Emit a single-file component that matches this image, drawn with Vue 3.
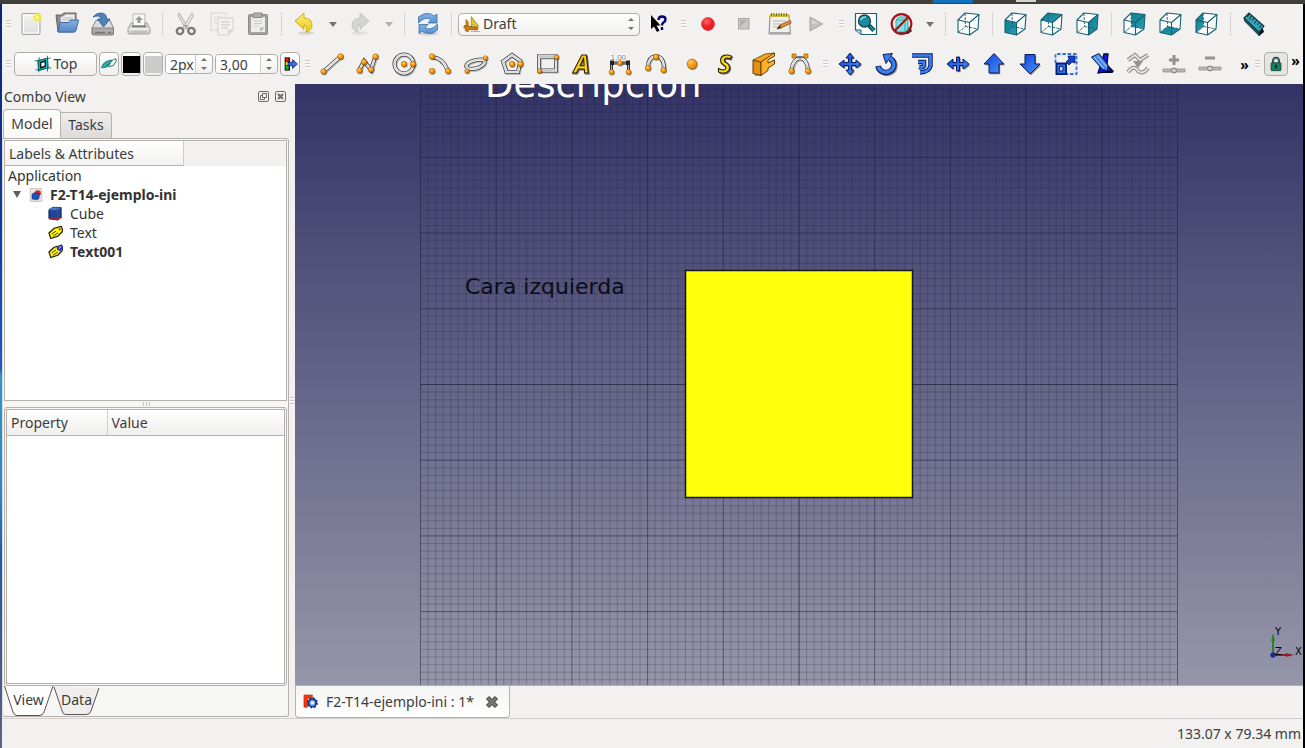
<script setup>
import { ref } from 'vue'

const node = (x, y, r = 3) => `<circle cx="${x + 0.6}" cy="${y + 0.8}" r="${r}" fill="#000" opacity=".45"/><circle cx="${x}" cy="${y}" r="${r - 0.3}" fill="url(#g-node)" stroke="#b86a00" stroke-width=".7"/>`
const tube = (d) => `<path d="${d}" fill="none" stroke="#999" stroke-width="4" transform="translate(1 1)" opacity=".6"/><path d="${d}" fill="none" stroke="#3a3d3e" stroke-width="4"/><path d="${d}" fill="none" stroke="#fff" stroke-width="2.4"/><path d="${d}" fill="none" stroke="#888" stroke-width=".5"/>`
const blue = (d) => `<path d="${d}" fill="#555" opacity=".7" transform="translate(1.2 1.2)"/><path d="${d}" fill="url(#g-blue)" stroke="#0b1a5e" stroke-width="1" stroke-linejoin="round"/>`
const letter = (c, fill) => `<text x="2" y="21" font-family="Open Sans, sans-serif" font-size="25" font-style="italic" font-weight="700" fill="${fill}" stroke="#29240a" stroke-width="1.1" filter="url(#g-shadow)">${c}</text>`
const faces = {
  front: 'M1 8L12.5 10.5V23L1 20.5Z',
  top: 'M1 8L8 1L22 2.5L12.5 10.5Z',
  right: 'M12.5 10.5L22 2.5L21 17L12.5 23Z',
  rear: 'M8 1L22 2.5L21 17L8.5 14.5Z',
  bottom: 'M1 20.5L8.5 14.5L21 17L12.5 23Z',
  left: 'M1 8L8 1L8.5 14.5L1 20.5Z',
}
const cube = (face) => `<path d="M1 8L8 1L22 2.5L21 17L12.5 23L1 20.5Z" fill="#fbfdfd"/>${face ? `<path d="${faces[face]}" fill="url(#g-teal)"/>` : ''}<path d="M8 1L8.5 14.5L1 20.5M8.5 14.5L21 17" fill="none" stroke="#17606f" stroke-width=".9" stroke-dasharray="3 1"/><path d="M1 8L8 1L22 2.5L21 17L12.5 23L1 20.5ZM1 8L12.5 10.5L22 2.5M12.5 10.5V23" fill="none" stroke="#17606f" stroke-width="1.1" stroke-linejoin="round"/>`
const tag = '<path d="M1 8.500L6.500 3.500L14 1.500Q16 3.500 15 7.500L10.500 12L3 14.500Z" fill="#fdf009" stroke="#1a1a06" stroke-width="1.300"/><path d="M4 9.500L8.500 6.500M5.500 12L10.500 8.500" stroke="#333"/><circle cx="12.500" cy="4.500" r="1" fill="#333"/>'

const icons = {
  new: '<rect x="3" y="1.5" width="18" height="21" rx="1" fill="url(#g-paper)" stroke="#a3a39e"/><rect x="4.5" y="3" width="15" height="18" fill="none" stroke="#fff"/><circle cx="18.5" cy="5.5" r="5" fill="#f8ee4a" opacity=".55"/><circle cx="18.5" cy="5.5" r="3" fill="#f6ea1d"/><circle cx="18.5" cy="5.5" r="1.3" fill="#fff"/>',
  open: '<path d="M1 3H7L8.500 1H21V10L19 20H3Z" fill="#8a8b88" stroke="#62635f"/><path d="M5 5.500L11 2H20V13H6Z" fill="#eee" stroke="#8c8c88" stroke-width=".7"/><path d="M7 6H18M7 8H18" stroke="#bbb"/><path d="M3 20L5 10.500H14L15.500 8H23.500L21 18.500Q20.700 20 19 20Z" fill="url(#g-folder)" stroke="#3e6ba4"/>',
  save: '<path d="M5 8.500H19L22.500 16V22Q22.500 23 21 23H3Q1 23 1 22V16Z" fill="#dcdcda" stroke="#80817e"/><path d="M1.500 16H22.500V22H1.500Z" fill="#aeafac" stroke="#757673" stroke-width=".8"/><path d="M4 20.500H14M17 20.500H20" stroke="#737472" stroke-width="1.500"/><path d="M2 5Q5 1 10 1Q15.500 1 15.800 7H19L12.500 15L6.500 7H10Q9.500 4 7 4Q4 4 2 5Z" fill="#4d82bb" stroke="#2b5a93" stroke-width=".8"/>',
  print: '<path d="M6 2H18V14H6Z" fill="#f7f7f7" stroke="#b5b5b2"/><path d="M12 4L16 8H13.500V11H10.500V8H8Z" fill="#999"/><path d="M4 11H6V14H18V11H20L23 17V20.500Q23 22 21 22H3Q1 22 1 20.500V17Z" fill="#d6d6d4" stroke="#9a9b98"/><path d="M1.500 17H22.500" stroke="#fff"/><path d="M5 14.500H19" stroke="#777" stroke-width="1.500"/><path d="M4 20H20" stroke="#aaa"/>',
  cut: '<path d="M5 1L14.500 15.500L12 17L4 3.500Z" fill="#e3e3e1" stroke="#a0a19e" stroke-width=".8"/><path d="M18 1L9 15.500L11.500 17L19.500 3.500Z" fill="#e9e9e7" stroke="#a0a19e" stroke-width=".8"/><ellipse cx="6" cy="19" rx="3.300" ry="3" fill="none" stroke="#7b7c7a" stroke-width="2.400" transform="rotate(-35 6 19)"/><ellipse cx="17.500" cy="19" rx="3.300" ry="3" fill="none" stroke="#7b7c7a" stroke-width="2.400" transform="rotate(35 17.500 19)"/><circle cx="11.700" cy="14" r="1" fill="#777"/>',
  copy: '<g opacity=".4"><rect x="1" y="1" width="15" height="17" fill="#f3f3f1" stroke="#a9aaa6"/><path d="M4 5H13M4 8H13M4 11H13" stroke="#bbb"/><path d="M8 6H23V18L18 23H8Z" fill="#f8f8f7" stroke="#9b9c99"/><path d="M11 10H20M11 13H20M11 16H18" stroke="#aaa" stroke-width="1.500"/><path d="M18 23V18H23Z" fill="#ccc" stroke="#999" stroke-width=".6"/></g>',
  paste: '<rect x="2.500" y="2.500" width="19" height="20" rx="1" fill="#a3a4a1" stroke="#8b8c89"/><path d="M5 5H19V20H5Z" fill="#ededeb"/><path d="M8 1H16V5.500H7V3Z" fill="#b0b1ae" stroke="#868784"/><path d="M8 9H16M8 11.500H16M8 14H13" stroke="#ccc"/><path d="M14 20V15.500H19Z" fill="#bbb"/>',
  undo: '<ellipse cx="13" cy="21" rx="8" ry="1.800" fill="#777" opacity=".22"/><path d="M2 9L11 1V6Q19 6.500 19 13Q19 18 13 20.500Q15 13.500 11 13V17.500Z" fill="url(#g-undo)" stroke="#c9a500" stroke-width=".9"/>',
  redo: '<g opacity=".45"><ellipse cx="11" cy="21" rx="8" ry="1.800" fill="#777" opacity=".3"/><path d="M20 9L11 1V6Q3 6.500 3 13Q3 18 9 20.500Q7 13.500 11 13V17.500Z" fill="#b1b2af" stroke="#8b8c89" stroke-width=".9"/></g>',
  refresh: '<ellipse cx="12" cy="21.500" rx="10" ry="2" fill="#777" opacity=".25"/><path d="M2.500 11V5Q8 .5 13 1.500Q16 2 18 4L21 2V11H12L15 7.500Q9 4 2.500 11Z" fill="url(#g-refresh)" stroke="#3b70ae" stroke-width=".8"/><path d="M21.500 12V18Q17 22.500 12 21.500Q8 21 6 19L3 21.500V12.500H12L9 16Q15 19 21.500 12Z" fill="url(#g-refresh)" stroke="#3b70ae" stroke-width=".8"/>',
  draft: '<path d="M8 16V1L18 14Z" fill="#e0c91a" stroke="#80750a" stroke-width=".8" transform="translate(3 1)"/><path d="M12 12V16H16Z" fill="#f2f1f0" stroke="#80750a" stroke-width=".6"/><path d="M2 14L20 17L19 20L8 19L7 22L3 21L4 18L1 17Z" fill="#d98007" stroke="#714100" stroke-width=".9"/><path d="M4 6L7 9V14H4Z" fill="#e89a20" stroke="#714100" stroke-width=".8"/><path d="M10 22H23" stroke="#999"/>',
  whats: '<path d="M5 3V17L8 14.500L11 20L13.500 18.500L10.500 13.500H14.500Z" fill="#000"/><path d="M12.500 8Q12.500 4.500 16 4.500Q19.500 4.500 19.500 7.500Q19.500 9.500 17.500 10.500Q16 11.500 16 13.500M16 15V18" fill="none" stroke="#00007d" stroke-width="2.400"/>',
  record: '<circle cx="12" cy="12" r="6.500" fill="url(#g-red)" stroke="#d33" stroke-width=".7"/>',
  stop: '<rect x="6.500" y="6.500" width="10.500" height="10.500" fill="#c8c8c6" stroke="#a7a8a5"/><path d="M8 15V8H15Z" fill="#b0b1ae"/>',
  macro: '<path d="M2 3H21L22.500 22H1Z" fill="#efefed" stroke="#888985"/><path d="M1 20H22.500V22H1Z" fill="#aaa"/><path d="M2 2H21V5H2Z" fill="#c9bb45"/><path d="M3.500 1V4M6 1V4M8.500 1V4M11 1V4M13.500 1V4M16 1V4M18.500 1V4" stroke="#81751d"/><path d="M5 9H18M5 12H13M5 15H11" stroke="#b9b9b6"/><path d="M9 17L12 13L22 8.500L23 11L13 16Z" fill="#e98f26" stroke="#7b4b16" stroke-width=".8"/><path d="M9 17L12 13L13 16Z" fill="#333"/><path d="M20.500 9L23 8L23.500 10.500L22 11.500Z" fill="#dc6464"/>',
  play: '<path d="M6 5L18.500 12L6 19Z" fill="#c0c1be" stroke="#a3a4a1"/><path d="M8 8L14 11L8 12Z" fill="#ddd"/>',
  fit: '<path d="M1.500 1.500H22.500V22.500H7L1.500 18Z" fill="#fff" stroke="#1e6470" stroke-width="1.200"/><path d="M1.500 18H7V22.500" fill="#b6d7da" stroke="#1e6470"/><circle cx="10.500" cy="9" r="6" fill="#1c8ba0" stroke="#0f4955" stroke-width="1.300"/><path d="M6.500 8Q8 4.500 12 5" fill="none" stroke="#9fd3db" stroke-width="1.500"/><path d="M15 13.500L20 18.500" stroke="#0f4955" stroke-width="4.500"/><path d="M16 14.500L19.500 18" stroke="#1c8ba0" stroke-width="2"/>',
  drawstyle: '<path d="M7 20L12 22H18L22 19L20 15Z" fill="#000" opacity=".85"/><path d="M6 8L9 5H18V18L15 20H6Z" fill="#7be3e4" stroke="#35a5aa"/><path d="M6 8H15V20M15 8L18 5" fill="none" stroke="#35a5aa"/><path d="M13 12L20 3" stroke="#f5d13c" stroke-width="1.500"/><circle cx="11.500" cy="12" r="9.800" fill="none" stroke="#a5131a" stroke-width="2.200"/><path d="M5 18.500L18 5.500" stroke="#a5131a" stroke-width="2.200"/>',
  iso: cube(''), front: cube('front'), top: cube('top'), right: cube('right'), rear: cube('rear'), bottom: cube('bottom'), left: cube('left'),
  measure: '<path d="M2 8L16 22L17 24L22 20L21 17Z" fill="#111"/><path d="M2 6L7 1L22 14L17 20.500Z" fill="#33a2b5" stroke="#0c3039" stroke-width="1.100"/><path d="M17 20.500V23.500L3 9.500L2 6Z" fill="#176071" stroke="#0c2a30" stroke-width=".8"/><path d="M7 2L5.500 5M9.500 4L7.500 7.500M12 6L10.500 8.500M14.500 8.500L12.500 11.500M17 10.500L15.500 13M19.500 12.500L17.500 16" stroke="#06242b"/>',
  line: tube('M3 20L21 4') + node(3.5, 19.5) + node(20.5, 4.5),
  wire: tube('M3 18.500L8 9L15 18L19 5') + node(3.5, 18.5) + node(8, 10) + node(15, 17.500) + node(19.500, 4.500),
  circle: tube('M12 2.500A9.500 9.500 0 1 0 12 21.500A9.500 9.500 0 1 0 12 2.500') + node(12, 12) + node(21, 12),
  arc: tube('M4 5Q15 6 19.500 18') + node(4, 4.500) + node(4, 19) + node(20, 19),
  ellipse: tube('M2.500 15.500C1 10.500 10 7.500 18 7.500C24 9 19 13.500 15 15.500C9 17.500 5 17.500 2.500 15.500') + node(3, 19, 2.500) + node(21.500, 6, 2.500),
  polygon: tube('M12 3L20.500 9L18 20H6.500L3 9.500Z') + node(12, 12) + node(20.500, 12),
  rect: tube('M3 4.500H20V18.500H3Z') + node(3.500, 19, 2.500) + node(20.500, 5, 2.500),
  text: letter('A', '#ffd20a'),
  dim: '<text x="2.500" y="8" font-family="Liberation Sans, sans-serif" font-size="8" fill="#777" stroke="#fff" stroke-width="1.500" paint-order="stroke">1,00</text><path d="M3.500 20V11H20.500V20" fill="none" stroke="#333" stroke-width="3"/><path d="M3.500 20V11H20.500V20" fill="none" stroke="#aaa" stroke-width="1"/><path d="M2 8.500H6V13H2ZM18 8.500H22V13H18Z" fill="#222"/>' + node(12, 11, 2.7) + node(3.500, 20, 2.7) + node(20.500, 20, 2.7),
  bspline: tube('M4 15Q4 5 12 4Q20 5 20 17') + node(4, 16) + node(12, 5) + node(19.500, 18),
  point: node(12, 12, 5.200),
  shape: letter('S', '#f5da1c'),
  facebinder: '<path d="M2 23.500V7L12 2L22 .8V4L15 6V10L22 7V11L15 15V18L9 21V23Z" fill="#333" opacity=".5" transform="translate(1 .5)"/><path d="M1 8L9 10V23.500L1 21.500Z" fill="#e88e10" stroke="#653d05"/><path d="M9 10L20 2L22.500 1V4L16 8V11L22.500 8V12L16 16V18.500L9 23.500Z" fill="#ffb02a" stroke="#653d05"/><path d="M1 8L13 2L22 1L9 10Z" fill="#f5a31c" stroke="#653d05" stroke-width=".8"/>',
  bezier: tube('M3.500 18Q5 7 12 6Q19 7 20 18') + '<path d="M6 4L12 6L18 4" stroke="#555" fill="none"/><path d="M4 2H8V6H4ZM16 2H20V6H16Z" fill="#f59a13" stroke="#9a5900" stroke-width=".7"/>' + node(3.500, 19) + node(20, 19),
  move: blue('M12 1L16 6H13.500V10.500H18V8L23 12L18 16V13.500H13.500V18H16L12 23L8 18H10.500V13.500H6V16L1 12L6 8V10.500H10.500V6H8Z'),
  rotate: '<path d="M4 14A8 7.500 0 1 0 16 6.500" fill="none" stroke="#555" opacity=".6" stroke-width="5.500" transform="translate(1 1)"/><path d="M4 14A8 7.500 0 1 0 16 6.500" fill="none" stroke="#0b1a5e" stroke-width="5.500"/><path d="M9 2.500L18.500 1.500L12 11.500Z" fill="#3b80ec" stroke="#0b1a5e"/><path d="M4.200 14.800A8 7.500 0 1 0 15.500 6" fill="none" stroke="#3b80ec" stroke-width="3.500"/>',
  offset: '<path d="M2 3.500H20.500V14Q19 20 10 20.500M8 10H14V14Q13 16 9 15" fill="none" stroke="#0b1a5e" stroke-width="4.500"/><path d="M2 3.500H20.500V14Q19 20 10 20.500M8 10H14V14Q13 16 9 15" fill="none" stroke="#3b80ec" stroke-width="2.600"/>',
  trimex: blue('M1 12L7 7V10.500H10.500V5H13.500V10.500H17V7L23 12L17 17V13.500H13.500V19H10.500V13.500H7V17Z'),
  upgrade: blue('M12 1.500L22 12H17V21H7V12H2Z'),
  downgrade: blue('M12 22L2 12H7V2.500H17V12H22Z'),
  scale: '<path d="M1.500 11V2H22.500V22H13" fill="none" stroke="#2f6fe8" stroke-width="1.800" stroke-dasharray="3.500 1.800"/><path d="M2.500 11.500H12V22H2.500Z" fill="#2a78ef" stroke="#08217c" stroke-width="2"/><path d="M5.500 14.500H9V19H5.500Z" fill="#ddd" stroke="#08217c"/><path d="M12 10L15 7L14 4H21V11L18 10L15 13Z" fill="#1742c6" stroke="#0b1a5e" stroke-width=".8"/>',
  edit: '<path d="M14 2H18L17 13L23 19L8 21L10 15Z" fill="#1018e0" stroke="#05082e" stroke-width="1.300"/><path d="M1.500 5L9 1.500L18 13L17.500 19L12 17Z" fill="#4386ec" stroke="#0b1a5e"/><path d="M4 5L14 17M7 3.500L17 15" stroke="#b6d3ff"/><path d="M8 21L22 18L23 21Z" fill="#05082e"/>',
  wiresp: '<g fill="none"><path d="M2 8L9 3L14 8L22 3M2 20Q8 12 12 19Q17 23 22 16" stroke="#888" stroke-width="4"/><path d="M2 8L9 3L14 8L22 3M2 20Q8 12 12 19Q17 23 22 16" stroke="#e5e5e3" stroke-width="2"/></g><path d="M7 9H17L12 16Z" fill="#929290"/>',
  addpoint: '<path d="M10.500 3H13.500V6.500H17V9.500H13.500V13H10.500V9.500H7V6.500H10.500Z" fill="#929290"/><path d="M1 17H23V20H1Z" fill="#bbb" stroke="#858583" stroke-width=".7"/><circle cx="12" cy="18.500" r="2.500" fill="#ccc" stroke="#777"/>',
  delpoint: '<path d="M7 4.500H17V7.500H7Z" fill="#929290"/><path d="M1 15H23V18H1Z" fill="#bbb" stroke="#858583" stroke-width=".7"/><circle cx="12" cy="16.500" r="2.500" fill="#ccc" stroke="#777"/>',
  plane: '<path d="M5 8L18 4L19 17L6 21Z" fill="#22c0c2" stroke="#0a5055" stroke-width="1.200"/><path d="M9 10L15 8V15L9 17Z" fill="#fff" stroke="#111" stroke-width="1.800"/><path d="M1 8L22 4M2 20L23 17M7 3L6 23M18 1L18 22" stroke="#0f7278" stroke-width="1.200"/>',
  construction: '<path d="M11 15L16 7L22 4L23 7L19 14L12 16Z" fill="#fff" stroke="#0f6b5d" stroke-width="1.400"/><path d="M1 18Q2 10 11 7L16 6L11 15L7 17Z" fill="#14a098" stroke="#0b5149" stroke-width="1"/><path d="M3 17Q7 10 14 8" stroke="#5be0cc" fill="none"/>',
  apply: '<path d="M4 2H12V22H4Z" fill="#161616"/><path d="M5.500 3.500H10V8H5.500Z" fill="#f11"/><path d="M5.500 9H10V14H5.500Z" fill="#e6e817"/><path d="M5.500 15H10V20.500H5.500Z" fill="#0b3"/><path d="M9 9.500H16V5.500L23 12L16 18.500V14.500H9Z" fill="#3471e8" stroke="#0b1a5e" stroke-width="1.200"/>',
  lock: '<path d="M7.500 11V7Q8 2.500 12 2.500Q16 2.500 16.500 7V11" fill="none" stroke="#15423a" stroke-width="3"/><path d="M7.500 10V7Q8 3 12 3Q16 3 16.500 7V10" fill="none" stroke="#7dafa3" stroke-width=".8"/><rect x="4.500" y="10" width="15" height="12" rx="1" fill="#15805f" stroke="#0e342a"/><circle cx="12" cy="15" r="1.700" fill="#05201a"/><path d="M12 15V19" stroke="#05201a" stroke-width="1.500"/>',
  doc: '<path d="M1.500 .5H14.500V15.500H1.500Z" fill="#e4e4e2" stroke="#c2c2bf"/><circle cx="10" cy="6" r="3.500" fill="#d5271c"/><path d="M3.500 7L6 5.500L11.500 6.500V12L9 13.500L3.500 12.500Z" fill="#2350b8" stroke="#122d77" stroke-width=".7"/>',
  box: '<path d="M1 4L5 1.500H14V12L10.500 15L1 13.500Z" fill="#1b479f" stroke="#071b4a"/><path d="M1 4L5 1.500H14L10 4.500Z" fill="#4c7dcc"/><path d="M10 4.500V14.500" stroke="#0a1d4d"/><path d="M1 13.500L10 14L15 12M10 14V2" stroke="#e41515" stroke-width="1.100" fill="none"/>',
  tag,
  tagsel: tag + '<path d="M9.500 2L12 4L14.500 0L16 3L13 8L9.500 5.500Z" fill="#1826f5"/><path d="M12 5L14 2.500" stroke="#cfe"/>',
  app: '<path d="M1 1H10V4.500H5V7H9V10H5V14H1Z" fill="#f5380b" stroke="#b3200a" stroke-width=".6"/><circle cx="10" cy="9.500" r="4" fill="#8fb0ed" stroke="#143b93" stroke-width="2"/><circle cx="10" cy="9.500" r="5.200" fill="none" stroke="#143b93" stroke-width="1.500" stroke-dasharray="2 2.080"/><circle cx="10" cy="9.500" r="1.500" fill="#fff"/>',
}

const fileTools = [
  ['new', 'New'], ['open', 'Open'], ['save', 'Save'], ['print', 'Print'], '|',
  ['cut', 'Cut'], ['copy', 'Copy'], ['paste', 'Paste'], '|',
  ['undo', 'Undo'], 'v', ['redo', 'Redo'], 'd', '|', ['refresh', 'Refresh'], '|',
]
const viewTools = [
  ['whats', "What's this?"], ':', ['record', 'Record macro'], ['stop', 'Stop macro'], ['macro', 'Macros'], ['play', 'Run macro'], ':',
  ['fit', 'Fit all'], ['drawstyle', 'Draw style'], 'v', '|', ['iso', 'Axonometric'], '|',
  ['front', 'Front view'], ['top', 'Top view'], ['right', 'Right view'], '|',
  ['rear', 'Rear view'], ['bottom', 'Bottom view'], ['left', 'Left view'], '|', ['measure', 'Measure'],
]
const draftTools = [
  ':', ['line', 'Line'], ['wire', 'Wire'], ['circle', 'Circle'], ['arc', 'Arc'], ['ellipse', 'Ellipse'], ['polygon', 'Polygon'],
  ['rect', 'Rectangle'], ['text', 'Text'], ['dim', 'Dimension'], ['bspline', 'B-spline'], ['point', 'Point'], ['shape', 'Shape string'],
  ['facebinder', 'Facebinder'], ['bezier', 'Bezier curve'], ':',
  ['move', 'Move'], ['rotate', 'Rotate'], ['offset', 'Offset'], ['trimex', 'Trimex'], ['upgrade', 'Upgrade'], ['downgrade', 'Downgrade'],
  ['scale', 'Scale'], ['edit', 'Edit'], ['wiresp', 'Wire to B-spline'], ['addpoint', 'Add point'], ['delpoint', 'Delete point'],
]
const kinds = { '|': 'sep', ':': 'grip', v: 'drop', d: 'drop dim' }

const workbench = ref('Draft')
const lineWidth = ref('2px')
const fontSize = ref('3,00')

const objects = [
  { icon: 'box', name: 'Cube' },
  { icon: 'tag', name: 'Text' },
  { icon: 'tagsel', name: 'Text001', active: true },
]

const grid = Array.from({ length: 101 }, (_, i) => ({
  x: 125.5 + i * 7.57,
  y: 300.5 + (i - 50) * 7.57,
  level: i === 50 ? 'axis' : i % 10 === 0 ? 'major' : 'minor',
}))
</script>

<template>
  <div class="window">
    <svg class="defs" aria-hidden="true">
      <defs>
        <radialGradient id="g-node" cx=".35" cy=".3" r=".8"><stop offset="0" stop-color="#ffd27a" /><stop offset=".45" stop-color="#ff9f14" /><stop offset="1" stop-color="#d97800" /></radialGradient>
        <radialGradient id="g-red" cx=".4" cy=".3" r=".8"><stop offset="0" stop-color="#fb6a6a" /><stop offset=".5" stop-color="#ee2229" /><stop offset="1" stop-color="#e01620" /></radialGradient>
        <linearGradient id="g-blue" x1="0" y1="0" x2="1" y2="1"><stop offset="0" stop-color="#0d3fe0" /><stop offset="1" stop-color="#4b97f3" /></linearGradient>
        <linearGradient id="g-teal" x1="0" y1="0" x2="1" y2="1"><stop offset="0" stop-color="#0c7c91" /><stop offset="1" stop-color="#2b9db2" /></linearGradient>
        <linearGradient id="g-paper" x1="0" y1="0" x2="0" y2="1"><stop offset="0" stop-color="#f3f3f2" /><stop offset="1" stop-color="#dededc" /></linearGradient>
        <linearGradient id="g-folder" x1="0" y1="0" x2="0" y2="1"><stop offset="0" stop-color="#87b1e0" /><stop offset="1" stop-color="#5688c6" /></linearGradient>
        <linearGradient id="g-undo" x1="0" y1="0" x2="0" y2="1"><stop offset="0" stop-color="#fbee83" /><stop offset="1" stop-color="#edc910" /></linearGradient>
        <linearGradient id="g-refresh" x1="0" y1="0" x2="0" y2="1"><stop offset="0" stop-color="#82b2e3" /><stop offset="1" stop-color="#5a93d2" /></linearGradient>
        <linearGradient id="g-sky" x1="0" y1="0" x2="0" y2="1"><stop offset="0" stop-color="#333366" /><stop offset="1" stop-color="#9696aa" /></linearGradient>
        <filter id="g-shadow"><feDropShadow dx="1" dy="1" stdDeviation=".4" flood-color="#333" flood-opacity=".7" /></filter>
      </defs>
    </svg>

    <div class="desktop-bar"><i class="launcher"></i><i class="thumb"></i></div>

    <div class="frame">
      <header>
        <div class="toolbar">
          <span class="grip"></span>
          <template v-for="(t, i) in fileTools" :key="i">
            <span v-if="typeof t === 'string'" :class="kinds[t]"></span>
            <button v-else class="tool" :aria-label="t[1]"><svg viewBox="0 0 24 24" v-html="icons[t[0]]"></svg></button>
          </template>
          <div class="workbench">
            <svg viewBox="0 0 24 24" v-html="icons.draft"></svg>
            <select v-model="workbench" aria-label="Workbench"><option>Draft</option></select>
            <span class="arrows"><i></i><i></i></span>
          </div>
          <template v-for="(t, i) in viewTools" :key="i">
            <span v-if="typeof t === 'string'" :class="kinds[t]"></span>
            <button v-else class="tool" :aria-label="t[1]"><svg viewBox="0 0 24 24" v-html="icons[t[0]]"></svg></button>
          </template>
        </div>

        <div class="toolbar">
          <span class="grip"></span>
          <div class="settings">
            <button class="push plane"><svg viewBox="0 0 24 24" v-html="icons.plane"></svg>Top</button>
            <button class="push" aria-label="Construction mode"><svg viewBox="0 0 24 24" v-html="icons.construction"></svg></button>
            <button class="push" aria-label="Line color"><i class="swatch black"></i></button>
            <button class="push" aria-label="Face color"><i class="swatch"></i></button>
            <div class="spin narrow">
              <input v-model="lineWidth" type="text" aria-label="Line width" />
              <span class="arrows"><i></i><i></i></span>
            </div>
            <div class="spin">
              <input v-model="fontSize" type="text" aria-label="Font size" />
              <span class="arrows"><i></i><i></i></span>
            </div>
            <button class="push" aria-label="Apply style"><svg viewBox="0 0 24 24" v-html="icons.apply"></svg></button>
          </div>
          <template v-for="(t, i) in draftTools" :key="i">
            <span v-if="typeof t === 'string'" :class="kinds[t]"></span>
            <button v-else class="tool" :aria-label="t[1]"><svg viewBox="0 0 24 24" v-html="icons[t[0]]"></svg></button>
          </template>
          <div class="overflow">
            <button class="more">»</button>
            <span class="grip"></span>
            <button class="push lock" aria-label="Toggle snap"><svg viewBox="0 0 24 24" v-html="icons.lock"></svg></button>
            <button class="more raised">»</button>
          </div>
        </div>
      </header>

      <main>
        <aside>
          <div class="dock-title">
            <h1>Combo View</h1>
            <button aria-label="Float"><svg viewBox="0 0 11 11"><rect x=".5" y=".5" width="10" height="10" rx="1.500" /><path d="M4.500 2.500H8.500V6.500H4.500ZM6.500 6.500V8.500H2.500V4.500H4.500" /></svg></button>
            <button aria-label="Close"><svg viewBox="0 0 11 11"><rect x=".5" y=".5" width="10" height="10" rx="1.500" /><path class="bold" d="M3 3L8 8M8 3L3 8" /></svg></button>
          </div>
          <nav class="tabs"><button class="current">Model</button><button>Tasks</button></nav>
          <div class="pane">
            <section class="tree">
              <div class="tree-head"><span>Labels &amp; Attributes</span></div>
              <ul>
                <li>Application</li>
                <li class="doc"><i class="twisty"></i><svg viewBox="0 0 16 16" v-html="icons.doc"></svg><b>F2-T14-ejemplo-ini</b></li>
                <li v-for="o in objects" :key="o.name" class="object" :class="{ active: o.active }">
                  <svg viewBox="0 0 16 16" v-html="icons[o.icon]"></svg>{{ o.name }}
                </li>
              </ul>
            </section>
            <div class="splitter"></div>
            <section class="props">
              <div class="props-box">
                <table>
                  <thead><tr><th>Property</th><th>Value</th></tr></thead>
                </table>
              </div>
            </section>
            <nav class="south-tabs">
              <svg class="trapezoids" viewBox="0 0 100 30" width="100" height="30" aria-hidden="true">
                <path d="M50 1L58.500 26Q59.500 28.500 62 28.500H82Q86 28.500 87 25L95 2" fill="#efeeec" />
                <path d="M.5 0L9 26Q10 29.500 13 29.500H35Q39 29.500 40 26L49 0" fill="#fff" />
              </svg>
              <button class="view">View</button><button class="data">Data</button>
            </nav>
          </div>
        </aside>

        <div class="handle"><span class="grip"></span></div>

        <div class="mdi">
          <svg class="scene" viewBox="0 0 1008 601" preserveAspectRatio="xMidYMid slice">
            <rect x="-1000" width="3008" height="601" fill="url(#g-sky)" />
            <g class="grid">
              <path v-for="(g, i) in grid" :key="i" :class="g.level" :d="`M${g.x} -78V679M125.500 ${g.y}H882.500`" />
            </g>
            <text class="white" x="190" y="13">Descripcion</text>
            <text class="label" x="170" y="210">Cara izquierda</text>
            <rect x="390.500" y="186.500" width="227" height="227" fill="#ffff0b" stroke="#15151c" stroke-width="1.500" />
            <g class="axes">
              <path d="M978 571V555" stroke="#258528" stroke-width="2" /><path d="M976 557L978 549L980 557Z" fill="#258528" />
              <path d="M978 571H992" stroke="#8b2022" stroke-width="2" /><path d="M991 569L999 571L991 573Z" fill="#8b2022" />
              <circle cx="978" cy="571" r="2.700" fill="#25259a" />
              <text x="980" y="551">Y</text><text x="980" y="571">Z</text><text x="1000" y="571">X</text>
            </g>
          </svg>
          <div class="mdi-tabs">
            <div class="mdi-tab">
              <svg viewBox="0 0 16 16" v-html="icons.app"></svg>
              <span>F2-T14-ejemplo-ini : 1*</span>
              <button aria-label="Close document"><svg viewBox="0 0 14 14"><path d="M2.500 2.500L11.500 11.500M11.500 2.500L2.500 11.500" stroke="#454543" stroke-width="4.500" /><path d="M3 3L11 11M11 3L3 11" stroke="#777775" stroke-width="2.500" /></svg></button>
            </div>
          </div>
        </div>
      </main>

      <footer>133.07 x 79.34 mm</footer>
    </div>
  </div>
</template>

<style>
html, body { margin: 0; background: #f2f1f0; }
</style>

<style scoped>
.window { height: 100vh; display: flex; flex-direction: column; overflow: hidden; font: 14px/19px "Noto Sans", "Open Sans", sans-serif; color: #3c3c3c; }
.window *, .window *::before { box-sizing: border-box; }
.defs { position: absolute; width: 0; height: 0; }
button { font: inherit; color: inherit; border: 0; padding: 0; margin: 0; background: none; display: flex; align-items: center; justify-content: center; flex: none; }
svg { display: block; flex: none; }

.desktop-bar { height: 4px; flex: none; background: linear-gradient(#42413c, #3c3b37); display: flex; justify-content: flex-end; gap: 43px; padding-right: 269px; }
.launcher { width: 40px; height: 3px; background: #0d70b8; }
.thumb { width: 20px; height: 2px; background: #d5d3d0; }
.frame { flex: 1; min-height: 0; display: flex; flex-direction: column; border-right: 2px solid #000; padding-left: 2px; background: linear-gradient(#0a2472, #103c9e 30%, #1a5cba 49%, #2f95cc 50%, #2a86c6 66%, #1c5cab 74%, #3f5a92 86%, #5a6486) 0 0 / 2px 100% no-repeat, #f2f1f0; }

.toolbar { height: 40px; display: flex; align-items: center; }
.tool { width: 36px; height: 36px; }
.tool svg { width: 24px; height: 24px; overflow: visible; }
.sep { width: 11px; flex: none; height: 24px; background: linear-gradient(#d6d4d1, #d6d4d1) 5px 0 / 1px 100% no-repeat; }
.grip { width: 14px; height: 8px; flex: none; background: repeating-linear-gradient(#cbc9c6 0 1px, #fdfdfd 1px 2px, transparent 2px 3px) 5px 0 / 5px 8px no-repeat; }
.toolbar > .grip:first-child { width: 11px; background-position-x: 4px; }
.drop { width: 20px; flex: none; display: flex; justify-content: center; }
.drop::before { content: ""; border: 4px solid transparent; border-top: 5px solid #73726f; border-bottom: 0; }
.drop.dim::before { border-top-color: #b3b2af; }

.workbench { position: relative; width: 182px; height: 23px; display: flex; align-items: center; margin-left: 1px; border: 1px solid #b0aeab; border-radius: 4px; background: linear-gradient(#fff, #f2f1f0); }
.workbench > svg { position: absolute; left: 4px; width: 18px; height: 18px; }
select { appearance: none; width: 100%; height: 100%; border: 0; background: none; font: inherit; color: inherit; padding: 0 20px 2px 24px; }
.workbench .arrows { position: absolute; right: 5px; }
.arrows { display: flex; flex-direction: column; gap: 6px; pointer-events: none; }
.arrows i { border: 3px solid transparent; border-top: 0; border-bottom: 3px solid #73726f; }
.arrows i + i { border-top: 3px solid #73726f; border-bottom: 0; }

.settings { display: flex; gap: 2px; align-items: center; margin-left: 1px; }
.push { width: 20px; height: 24px; border: 1px solid #b0aeab; border-radius: 4px; background: linear-gradient(#fff, #efeeed); }
.push svg { width: 16px; height: 16px; }
.plane { width: 83px; gap: 2px; padding-bottom: 1px; }
.plane svg { width: 18px; height: 18px; }
.swatch { width: 17px; height: 17px; margin: 0 -1px; background: #ccc; flex: none; }
.swatch.black { background: #000; }
.spin { width: 63px; height: 20px; display: flex; align-items: center; border: 1px solid #b0aeab; border-radius: 4px; background: linear-gradient(#fff, #f2f1f0); overflow: hidden; }
.spin.narrow { width: 48px; }
.spin input { flex: 1; min-width: 0; height: 100%; border: 0; border-right: 1px solid #cfcdca; padding: 0 0 0 4px; font: inherit; color: inherit; background: #fff; outline: 0; }
.spin .arrows { padding: 0 5px; }
.overflow { display: flex; align-items: center; margin-left: auto; }
.overflow .grip { width: 12px; background-position-x: 3px; }
.more { width: 15px; color: #000; font-size: 14px; font-weight: 700; }
.more.raised { margin-bottom: 8px; }
.lock { width: 24px; background: #e6e4e2; }

main { flex: 1; min-height: 0; display: flex; }
aside { width: 287px; flex: none; display: flex; flex-direction: column; margin-bottom: 1px; }
.dock-title { height: 25px; display: flex; align-items: center; gap: 6px; padding: 0 3px 0 2px; }
h1 { flex: 1; margin: 0; font: inherit; }
.dock-title svg { width: 11px; height: 11px; fill: none; stroke: #6c6b69; }
.dock-title .bold { stroke-width: 2; }
.tabs { height: 29px; display: flex; align-items: flex-end; padding-left: 1px; }
.tabs button { width: 51px; height: 26px; padding-bottom: 2px; border: 1px solid #b5b2ae; border-left: 0; border-bottom: 0; border-radius: 0 4px 0 0; background: linear-gradient(#efeeec, #dddbd8); }
.tabs .current { width: 58px; height: 29px; border-left: 1px solid #b5b2ae; border-radius: 4px 4px 0 0; background: linear-gradient(#fff, #f8f8f7); }
.pane { flex: 1; min-height: 0; display: flex; flex-direction: column; border: 1px solid #b5b2ae; border-left-color: #dbd9d6; border-radius: 0 3px 3px 3px; background: #f6f6f5; padding: 1px 0 0 1px; }
.tree { flex: 262; min-height: 0; border: 1px solid #b5b2ae; background: #fff; margin-right: 1px; }
.tree-head { height: 25px; background: #f2f1f0; }
.tree-head span { display: flex; align-items: center; width: 179px; height: 25px; padding-left: 4px; background: linear-gradient(#fff, #f3f2f1); border-right: 1px solid #cfcdca; border-bottom: 1px solid #b5b2ae; }
ul { list-style: none; margin: 0; padding: 0; color: #333; }
li { height: 19px; display: flex; align-items: center; padding-left: 3px; }
li svg { width: 15px; height: 15px; }
.doc { padding-left: 8px; }
.doc svg { width: 14px; height: 14px; margin: 0 7px 0 8px; }
.twisty { border: 4px solid transparent; border-top: 7px solid #5f5e5c; border-bottom: 0; }
.object { padding-left: 43px; gap: 7px; }
.active { font-weight: 700; }
.splitter { height: 6px; flex: none; background: repeating-linear-gradient(90deg, #c5c3c0 0 1px, transparent 1px 3px) center / 7px 4px no-repeat; }
.props { flex: 278; min-height: 0; border: 1px solid #b5b2ae; border-radius: 3px; padding: 1px; margin-right: 1px; }
.props-box { height: 100%; border: 1px solid #b5b2ae; background: #fff; }
table { width: 100%; border-collapse: collapse; table-layout: fixed; }
th { height: 25px; padding: 1px 0 0 4px; text-align: left; font-weight: 400; background: linear-gradient(#fff, #efeeed); border-bottom: 1px solid #b5b2ae; }
th:first-child { width: 100px; border-right: 1px solid #cfcdca; }
.south-tabs { position: relative; height: 30px; flex: none; display: flex; align-items: flex-start; }
.trapezoids { position: absolute; left: 0; top: 0; stroke: #555; }
.south-tabs button { position: relative; height: 27px; }
.view { width: 49px; }
.data { width: 47px; }

.handle { width: 6px; flex: none; display: flex; align-items: center; justify-content: center; }
.handle .grip { width: 5px; background-position: 0 0; }
.mdi { flex: 1; min-width: 0; display: flex; flex-direction: column; }
.scene { width: 100%; flex: 1; min-height: 0; }
.grid path { fill: none; stroke: #1c1c38; stroke-width: 1; }
.grid .minor { opacity: .22; }
.grid .major { opacity: .5; }
.grid .axis { opacity: .7; }
.white { font: 37px "DejaVu Sans", sans-serif; fill: #fff; }
.label { font: 22px "DejaVu Sans", sans-serif; fill: #0c0c14; }
.axes text { font: 10px "DejaVu Sans", sans-serif; fill: #000; }
.mdi-tabs { height: 33px; flex: none; border-top: 1px solid #b5b2ae; }
.mdi-tab { width: 215px; height: 32px; display: flex; align-items: center; padding-left: 7px; border: 1px solid #b5b2ae; border-top: 0; border-radius: 0 0 4px 4px; background: linear-gradient(#f4f4f3, #fff); }
.mdi-tab > svg { width: 15px; height: 15px; margin-right: 8px; }
.mdi-tab span { width: 159px; white-space: nowrap; }
.mdi-tab button svg { width: 14px; height: 14px; }
footer { height: 30px; flex: none; border-top: 1px solid #d3d1ce; display: flex; align-items: center; justify-content: flex-end; padding-right: 2px; }
</style>
